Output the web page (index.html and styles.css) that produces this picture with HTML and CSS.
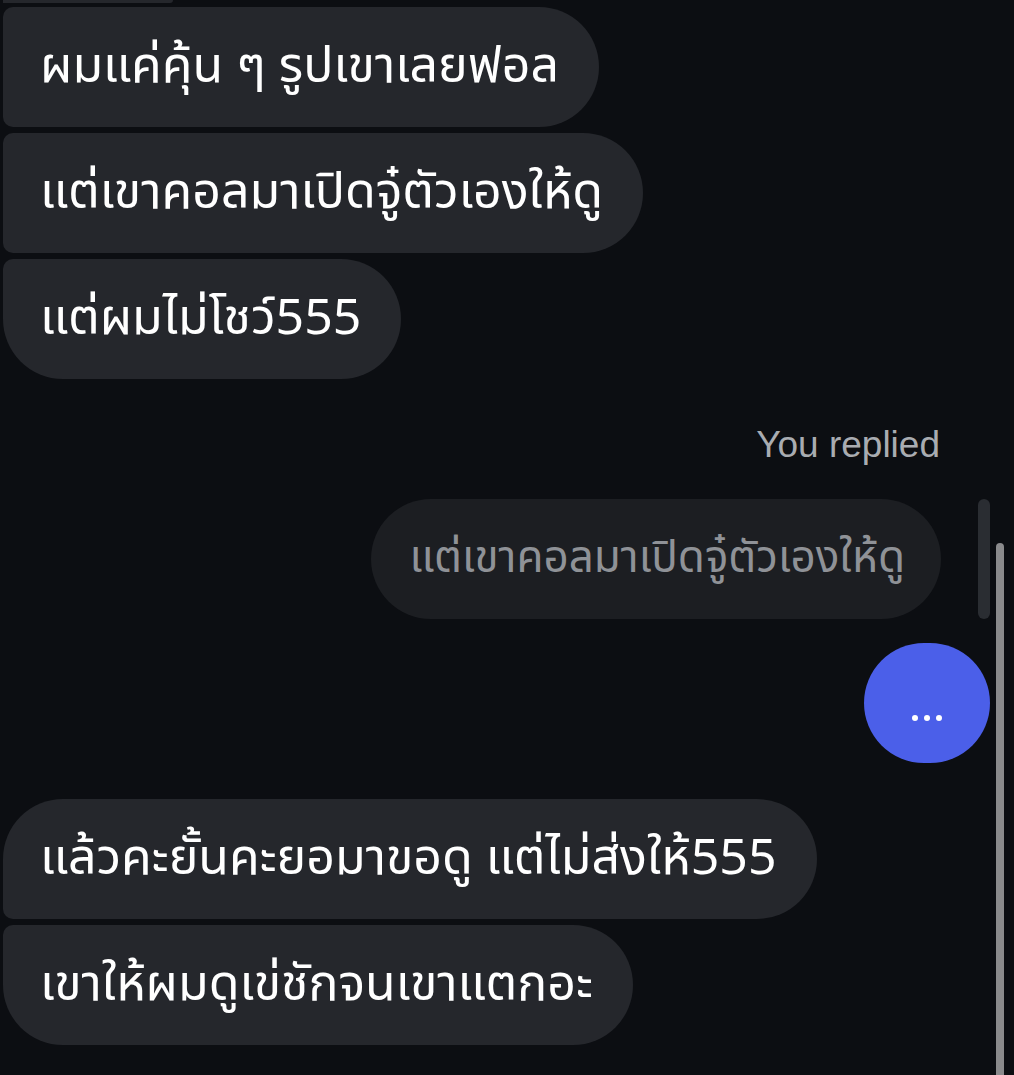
FILE: index.html
```html
<!DOCTYPE html>
<html lang="th">
<head>
  <meta charset="UTF-8">
  <meta name="viewport" content="width=device-width, initial-scale=1.0">
  <title>Chat</title>
  <link rel="stylesheet" href="styles.css">
</head>
<body>

  <div class="chat">
    <div class="prev-tail"></div>

    <div class="group">
      <div class="bubble">ผมแค่คุ้น ๆ รูปเขาเลยฟอล</div>
      <div class="bubble">แต่เขาคอลมาเปิดจู๋ตัวเองให้ดู</div>
      <div class="bubble last">แต่ผมไม่โชว์555</div>
    </div>

    <div class="reply">
      <div class="reply-label">You replied</div>
      <div class="reply-row">
        <div class="reply-bubble">แต่เขาคอลมาเปิดจู๋ตัวเองให้ดู</div>
        <div class="reply-bar"></div>
      </div>
    </div>

    <div class="out-row">
      <div class="out-bubble">
        <span class="dot"></span><span class="dot"></span><span class="dot"></span>
      </div>
    </div>

    <div class="group new">
      <div class="bubble first">แล้วคะยั้นคะยอมาขอดู แต่ไม่ส่งให้555</div>
      <div class="bubble last">เขาให้ผมดูเข่ชักจนเขาแตกอะ</div>
    </div>
  </div>

  <div class="scrollbar"></div>

</body>
</html>
```

FILE: styles.css
```css
body {
  margin: 0;
  background-color: #0c0e12;
  font-family: "Noto Sans Thai", "Noto Sans", "DejaVu Sans", sans-serif;
  color: #ffffff;
  height: 1075px;
  overflow: hidden;
}
.chat {
  padding-left: 3px;
}
.prev-tail {
  width: 170px;
  height: 3px;
  background-color: #25272c;
  border-radius: 0 0 10px 0;
  margin-bottom: 4px;
}
.group {
  display: flex;
  flex-direction: column;
  align-items: flex-start;
  gap: 6px;
}
.group.new {
  margin-top: 36px;
}
.bubble {
  background-color: #25272c;
  font-size: 50px;
  line-height: 60px;
  padding: 30px 40px 30px 37px;
  border-radius: 10px 60px 60px 10px;
}
.bubble.first {
  border-top-left-radius: 60px;
}
.bubble.last {
  border-bottom-left-radius: 60px;
}
.reply {
  margin-top: 46px;
}
.reply-label {
  text-align: right;
  padding-right: 74px;
  font-family: "Liberation Sans", Arial, sans-serif;
  font-size: 37px;
  line-height: 40px;
  color: #a9acb1;
  margin-bottom: 34px;
}
.reply-row {
  display: flex;
  justify-content: flex-end;
  align-items: stretch;
  gap: 37px;
  padding-right: 24px;
}
.reply-bubble {
  background-color: #1c1e22;
  color: #8f9297;
  font-size: 44px;
  line-height: 60px;
  padding: 30px 36px 30px 38px;
  border-radius: 60px;
}
.reply-bar {
  width: 12px;
  background-color: #2a2d32;
  border-radius: 6px;
}
.out-row {
  display: flex;
  justify-content: flex-end;
  padding-right: 24px;
  margin-top: 24px;
}
.out-bubble {
  width: 126px;
  height: 120px;
  border-radius: 60px;
  background-color: #4b5fe9;
  display: flex;
  justify-content: center;
  align-items: center;
  gap: 6px;
  padding-top: 30px;
  box-sizing: border-box;
}
.dot {
  width: 6px;
  height: 6px;
  border-radius: 50%;
  background-color: #ffffff;
}
.scrollbar {
  position: absolute;
  top: 543px;
  left: 996px;
  width: 8px;
  height: 540px;
  background-color: #8a8a8c;
  border-radius: 4px;
}
```
